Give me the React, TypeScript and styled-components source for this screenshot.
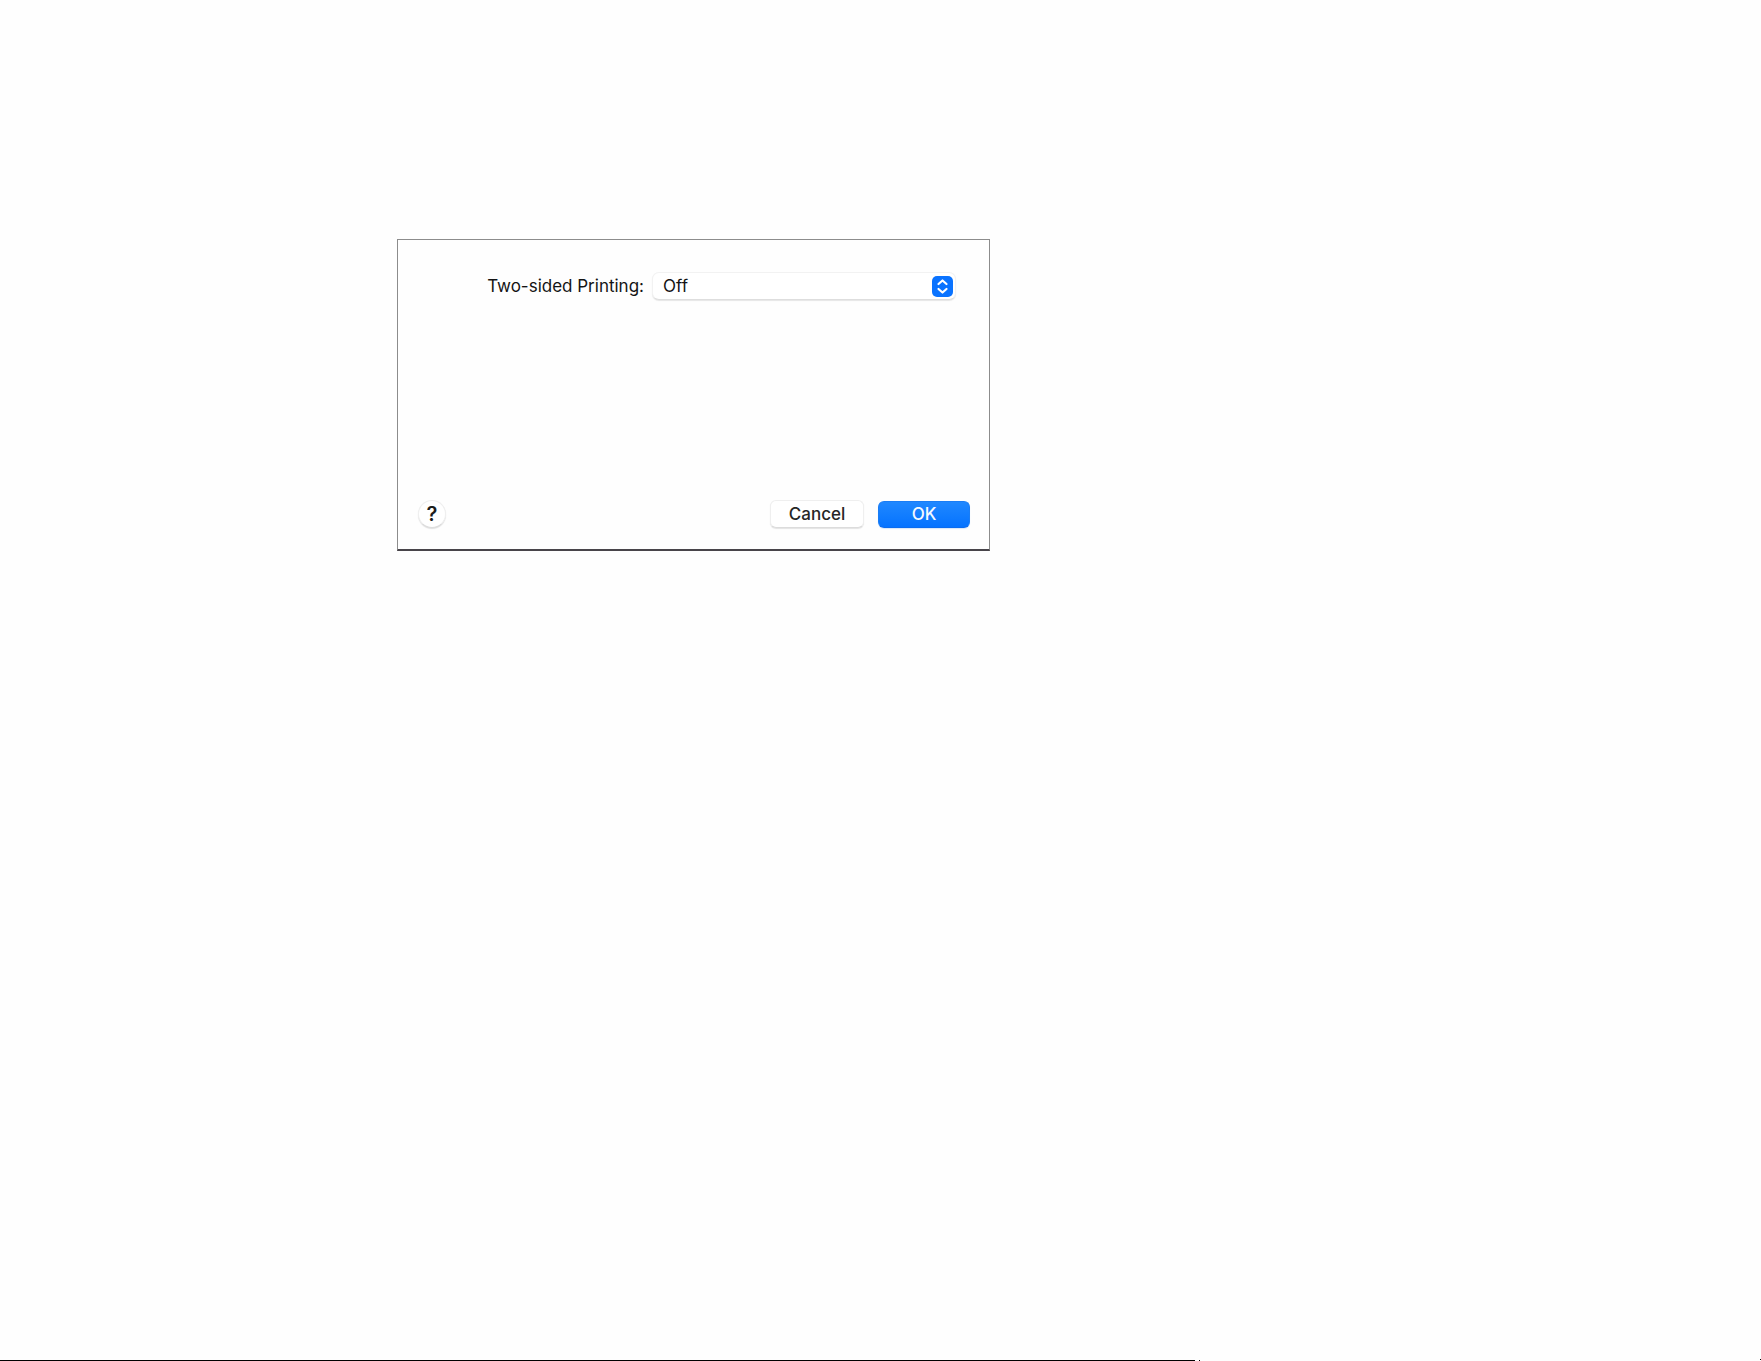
import React, { useState } from "react";
import styled, { createGlobalStyle } from "styled-components";

const GlobalStyle = createGlobalStyle`
  *, *::before, *::after { box-sizing: border-box; }
  body {
    margin: 0;
    background: #fefefe;
    color: #141414;
    font-family: Inter, "Liberation Sans", sans-serif;
  }
`;

const Page = styled.div`
  display: flex;
  flex-direction: column;
  min-height: 100vh;
`;

const Content = styled.main`
  flex: 1;
  padding: 239px 24px 24px 397px;
`;

const Dialog = styled.form`
  display: flex;
  flex-direction: column;
  justify-content: space-between;
  gap: 200px;
  max-width: 593px;
  padding: 32px 19px 21px 20px;
  background: #fefefe;
  border: 1px solid #8c8c8c;
  border-bottom: 2px solid #48444a;
`;

const Field = styled.div`
  display: flex;
  align-items: center;
  justify-content: flex-end;
  gap: 8px;
  padding-right: 14px;
`;

const Label = styled.label`
  font-size: 17px;
  font-weight: 400;
  line-height: 28px;
`;

const SelectBox = styled.div`
  display: grid;
  align-items: center;
  flex: 0 1 304px;
  height: 28px;
`;

const Select = styled.select`
  grid-area: 1 / 1;
  width: 100%;
  height: 28px;
  padding: 0 32px 0 10px;
  appearance: none;
  background: #ffffff;
  border: 1px solid #f2f2f2;
  border-bottom-color: #dedede;
  border-radius: 7px;
  box-shadow: 0 1px 1px #e6e6e6;
  color: #141414;
  font: 400 17px/24px Inter, "Liberation Sans", sans-serif;
`;

const Stepper = styled.svg`
  grid-area: 1 / 1;
  justify-self: end;
  width: 21px;
  height: 21px;
  margin-right: 3px;
  pointer-events: none;
`;

const Actions = styled.div`
  display: flex;
  align-items: center;
  gap: 14px;
`;

const Button = styled.button<{ $primary?: boolean }>`
  width: ${(p) => (p.$primary ? 92 : 94)}px;
  height: ${(p) => (p.$primary ? 27 : 28)}px;
  padding: 0;
  border: 1px solid ${(p) => (p.$primary ? "#1a7df5" : "#efefef")};
  border-bottom-color: ${(p) => (p.$primary ? "#0a6cf0" : "#dcdcdc")};
  border-radius: 6px;
  background: ${(p) => (p.$primary ? "linear-gradient(#2088ff, #0573ff)" : "#ffffff")};
  box-shadow: 0 1px 1px ${(p) => (p.$primary ? "#d8e6f8" : "#e4e4e4")};
  color: ${(p) => (p.$primary ? "#f4f9ff" : "#262626")};
  font: 500 17px/24px Inter, "Liberation Sans", sans-serif;
`;

const HelpButton = styled.button`
  width: 28px;
  height: 28px;
  margin-right: auto;
  padding: 0;
  border: 1px solid #efefef;
  border-bottom-color: #dcdcdc;
  border-radius: 50%;
  background: #ffffff;
  box-shadow: 0 1px 1px #e0e0e0;
  color: #1c1c1c;
  font: 600 20px/24px Inter, "Liberation Sans", sans-serif;
`;

const Footer = styled.footer`
  display: flex;
  align-items: flex-end;
  gap: 4px;
  height: 2px;
`;

const Rule = styled.span`
  width: 67.85%;
  height: 1px;
  background: #000000;
`;

const Dot = styled.span<{ $corner?: boolean }>`
  width: 1px;
  height: 1px;
  margin-left: ${(p) => (p.$corner ? "auto" : "0")};
  align-self: ${(p) => (p.$corner ? "flex-start" : "flex-end")};
  background: #000000;
`;

export default function App() {
  const [mode, setMode] = useState("Off");
  return (
    <>
      <GlobalStyle />
      <Page>
        <Content>
          <Dialog onSubmit={(e) => e.preventDefault()}>
            <Field>
              <Label htmlFor="two-sided">Two-sided Printing:</Label>
              <SelectBox>
                <Select id="two-sided" value={mode} onChange={(e) => setMode(e.target.value)}>
                  <option>Off</option>
                </Select>
                <Stepper viewBox="0 0 21 21" aria-hidden="true">
                  <rect width="21" height="21" rx="5" fill="#0a73ff" />
                  <path
                    d="M6.5 8 10.5 4.5 14.5 8M6.5 13 10.5 16.5 14.5 13"
                    fill="none"
                    stroke="#ffffff"
                    strokeWidth="2.2"
                    strokeLinecap="round"
                    strokeLinejoin="round"
                  />
                </Stepper>
              </SelectBox>
            </Field>
            <Actions>
              <HelpButton type="button" aria-label="Help">?</HelpButton>
              <Button type="button">Cancel</Button>
              <Button type="submit" $primary>OK</Button>
            </Actions>
          </Dialog>
        </Content>
        <Footer>
          <Rule />
          <Dot />
          <Dot $corner />
        </Footer>
      </Page>
    </>
  );
}
